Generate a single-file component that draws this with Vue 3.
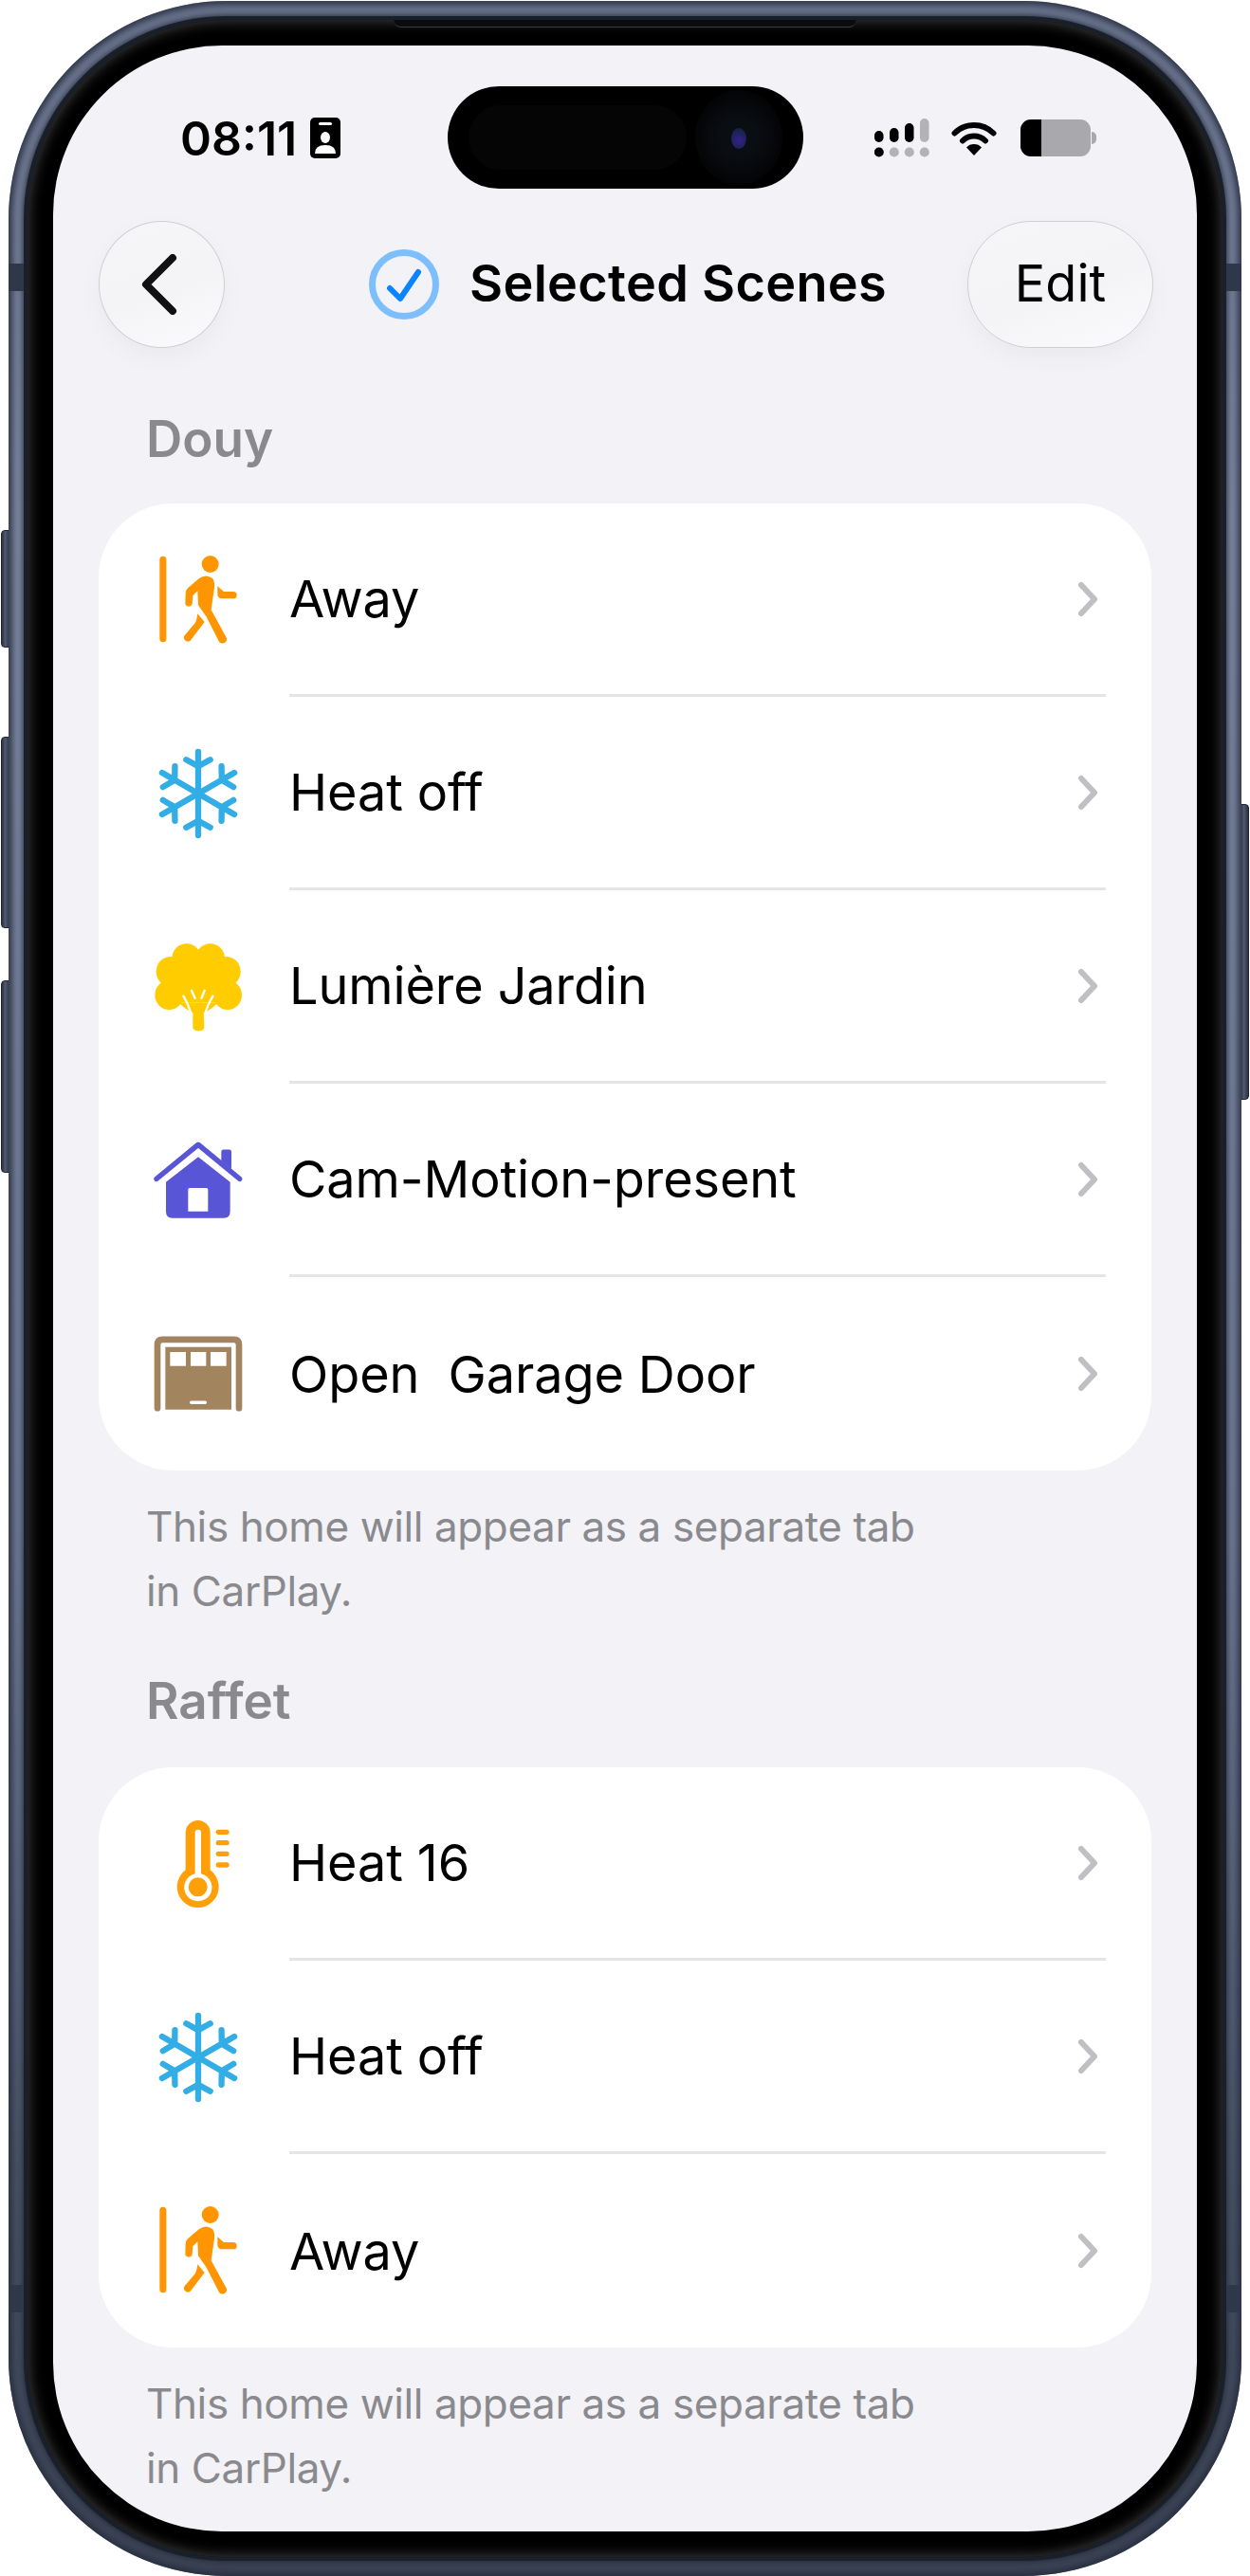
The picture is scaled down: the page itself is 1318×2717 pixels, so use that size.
<script setup>
const sections = [
  {
    name: 'Douy',
    rows: [
      { label: 'Away', icon: 'away' },
      { label: 'Heat off', icon: 'snow' },
      { label: 'Lumière Jardin', icon: 'tree' },
      { label: 'Cam-Motion-present', icon: 'house' },
      { label: 'Open  Garage Door', icon: 'garage' },
    ],
  },
  {
    name: 'Raffet',
    rows: [
      { label: 'Heat 16', icon: 'thermo' },
      { label: 'Heat off', icon: 'snow' },
      { label: 'Away', icon: 'away' },
    ],
  },
]
const spokes = [0, 60, 120, 180, 240, 300]
</script>

<template>
  <div class="page">
    <span class="side-btn left" style="top: 559px; height: 124px"></span>
    <span class="side-btn left" style="top: 777px; height: 202px"></span>
    <span class="side-btn left" style="top: 1034px; height: 203px"></span>
    <span class="side-btn right" style="top: 848px; height: 312px"></span>

    <div class="phone">
      <span class="antenna a-left" style="top: 277px"></span>
      <span class="antenna a-right" style="top: 277px"></span>
      <span class="antenna a-left" style="top: 2409px"></span>
      <span class="antenna a-right" style="top: 2409px"></span>
      <div class="edge">
        <div class="bezel">
          <span class="speaker"></span>
          <div class="screen">
            <div class="island">
              <span class="sensor"></span>
              <span class="cam"><span class="lens"></span></span>
            </div>

            <div class="status">
              <span class="time">08:11</span>
              <svg class="badge" width="32" height="43" viewBox="0 0 32 43">
                <rect width="32" height="43" rx="5" fill="#000" />
                <rect x="9" y="5" width="14" height="3" rx="1.5" fill="#fff" />
                <ellipse cx="16" cy="21" rx="5" ry="6" fill="#fff" />
                <path d="M5 38 Q5 29 16 29 Q27 29 27 38 Z" fill="#fff" />
              </svg>
              <div class="status-right">
                <svg width="58" height="41" viewBox="0 0 58 41">
                  <rect x="0" y="13" width="9.5" height="12" rx="4.7" fill="#000" />
                  <rect x="16" y="10" width="9.5" height="15" rx="4.7" fill="#000" />
                  <rect x="32" y="5" width="9.5" height="20" rx="4.7" fill="#000" />
                  <rect x="48" y="0" width="9.5" height="25" rx="4.7" fill="#b3b3b6" />
                  <circle cx="4.8" cy="35.5" r="5" fill="#000" />
                  <circle cx="20.8" cy="35.5" r="5" fill="#b3b3b6" />
                  <circle cx="36.8" cy="35.5" r="5" fill="#b3b3b6" />
                  <circle cx="52.8" cy="35.5" r="5" fill="#b3b3b6" />
                </svg>
                <svg class="wifi" width="48" height="37" viewBox="0 0 48 37">
                  <path d="M3.5 13.5 A 29 29 0 0 1 44.5 13.5" fill="none" stroke="#000" stroke-width="6" stroke-linecap="round" />
                  <path d="M12 21.5 A 17 17 0 0 1 36 21.5" fill="none" stroke="#000" stroke-width="6" stroke-linecap="round" />
                  <path d="M24 37 L16 28.5 A 11 11 0 0 1 32 28.5 Z" fill="#000" />
                </svg>
                <div class="battery"><span class="battery-fill"></span></div>
              </div>
            </div>

            <header class="nav">
              <button class="glass back">
                <svg width="38" height="64" viewBox="0 0 38 64">
                  <path d="M33 4 L5 32 L33 60" fill="none" stroke="#111" stroke-width="8" stroke-linecap="round" stroke-linejoin="round" />
                </svg>
              </button>
              <div class="title">
                <svg width="74" height="74" viewBox="0 0 74 74">
                  <circle cx="37" cy="37" r="33.5" fill="none" stroke="#7dbffd" stroke-width="7" />
                  <path d="M22 41 L33 52 L52 24" fill="none" stroke="#0a84ff" stroke-width="6" stroke-linecap="round" stroke-linejoin="round" />
                </svg>
                <span>Selected Scenes</span>
              </div>
              <button class="glass edit">Edit</button>
            </header>

            <section v-for="section in sections" :key="section.name" class="section">
              <h2>{{ section.name }}</h2>
              <ul class="card">
                <li v-for="row in section.rows" :key="row.label" class="row">
                  <svg class="icon" width="100" height="100" viewBox="0 0 300 300">
                    <g v-if="row.icon === 'away'" transform="translate(-87,-69)" fill="#ff9500">
                      <rect x="115" y="80" width="21" height="272" rx="10.5" />
                      <circle cx="275" cy="105" r="27" />
                      <path d="M240 150 Q262 135 282 150 Q290 160 288 180 L278 250 L325 335 A13 13 0 0 1 303 350 L262 270 L237 235 L235 190 L220 205 L218 232 A12 12 0 0 1 196 232 L197 195 Q198 185 205 180 Z" />
                      <path d="M298 175 L318 192 L348 192 A11 11 0 0 1 348 214 L312 214 Q298 212 298 200 Z" />
                      <path d="M235 262 L257 288 L212 347 A13 13 0 0 1 192 333 L228 290 Q233 280 235 262 Z" />
                    </g>
                    <g v-else-if="row.icon === 'snow'" transform="translate(150,150)" fill="none" stroke="#32ade6" stroke-width="19" stroke-linecap="round" stroke-linejoin="round">
                      <path
                        v-for="deg in spokes"
                        :key="deg"
                        :transform="`rotate(${deg})`"
                        d="M0 0 V-132 M-38 -107 L0 -86 L38 -107"
                      />
                    </g>
                    <g v-else-if="row.icon === 'tree'" transform="translate(-87,-33) scale(1,1.033)">
                      <g fill="#ffcc00">
                        <circle cx="200" cy="90" r="46" />
                        <circle cx="275" cy="90" r="46" />
                        <circle cx="150" cy="130" r="46" />
                        <circle cx="325" cy="130" r="46" />
                        <circle cx="145" cy="202" r="45" />
                        <circle cx="330" cy="202" r="45" />
                        <rect x="150" y="90" width="175" height="135" />
                        <path d="M175 225 Q190 240 215 255 L260 255 Q285 240 300 225 Z" />
                        <path d="M220 240 H254 L256 300 Q256 312 238 312 Q220 312 220 300 Z" />
                      </g>
                      <g fill="none" stroke="#fff" stroke-width="7">
                        <path d="M189 203 Q208 235 216 265" />
                        <path d="M285 203 Q264 235 258 265" />
                        <path d="M215 186 L228 214" />
                        <path d="M258 186 L246 214" />
                      </g>
                    </g>
                    <g v-else-if="row.icon === 'house'" transform="translate(-87,-645) scale(1,1.033)" fill="#5856d6">
                      <path d="M310 682 Q310 675 317 675 H335 Q342 675 342 682 V735 L310 710 Z" />
                      <path d="M105 765 L237 660 L368 765" fill="none" stroke="#5856d6" stroke-width="16" stroke-linecap="round" stroke-linejoin="round" />
                      <path fill-rule="evenodd" d="M237 698 L338 775 V865 Q338 885 318 885 H155 Q135 885 135 865 V775 Z M210 793 Q205 793 205 798 V865 H268 V798 Q268 793 263 793 Z" />
                    </g>
                    <g v-else-if="row.icon === 'garage'" transform="translate(-87,-1257) scale(1,1.033)" fill="#a2845e">
                      <path d="M108 1467 V1273 Q108 1257 124 1257 H350 Q366 1257 366 1273 V1467" fill="none" stroke="#a2845e" stroke-width="20" stroke-linecap="round" />
                      <path fill-rule="evenodd" d="M133 1280 H342 V1472 H133 Z M148 1295 V1338 H198 V1295 Z M213 1295 V1338 H262 V1295 Z M276 1295 V1338 H326 V1295 Z M215 1445 Q210 1445 210 1450 Q210 1455 215 1455 H259 Q264 1455 264 1450 Q264 1445 259 1445 Z" />
                    </g>
                    <g v-else transform="translate(-87,-45)">
                      <path fill="#ff9f0a" d="M197 96 A39 39 0 0 1 275 96 V214 A66 66 0 1 1 197 214 Z" />
                      <path fill="#fff" d="M227 96 A9.5 9.5 0 0 1 246 96 V226 A44 44 0 1 1 227 226 Z" />
                      <circle cx="236" cy="268" r="30" fill="#ff9f0a" />
                      <g fill="#ff9f0a">
                        <rect x="293" y="86" width="42" height="16" rx="8" />
                        <rect x="293" y="120" width="42" height="16" rx="8" />
                        <rect x="293" y="155" width="42" height="16" rx="8" />
                        <rect x="293" y="190" width="42" height="16" rx="8" />
                      </g>
                    </g>
                  </svg>
                  <div class="row-main">
                    <span class="label">{{ row.label }}</span>
                    <svg class="chev" width="22" height="38" viewBox="0 0 22 38">
                      <path d="M4 4 L18 19 L4 34" fill="none" stroke="#c0c0c4" stroke-width="6" stroke-linecap="round" stroke-linejoin="round" />
                    </svg>
                  </div>
                </li>
              </ul>
              <p class="foot">This home will appear as a separate tab<br />in CarPlay.</p>
            </section>
          </div>
        </div>
      </div>
    </div>
  </div>
</template>

<style>
body {
  background: #fff;
}
</style>

<style scoped>
.page {
  position: relative;
  width: 1318px;
  height: 2717px;
  overflow: hidden;
  font-family: Inter, 'Liberation Sans', sans-serif;
}

/* -------------------------- */
/* HARDWARE */
/* -------------------------- */
.side-btn {
  position: absolute;
  width: 10px;
  box-sizing: border-box;
  background: linear-gradient(to right, #2b3242, #505a70 45%, #2a3140);
  border: 1px solid #1f2531;
}
.side-btn.left {
  left: 1px;
  border-radius: 4px 0 0 4px;
}
.side-btn.right {
  right: 1px;
  border-radius: 0 4px 4px 0;
}

.phone {
  position: relative;
  margin: 1px 0 0 9px;
  width: 1300px;
  height: 2716px;
  padding: 16px;
  box-sizing: border-box;
  border-radius: 230px;
  background: linear-gradient(to bottom, #667089, #78839c 20%, #6b7690 60%, #465063 85%, #3a4253);
  box-shadow: inset 0 0 6px 4px rgba(38, 45, 62, 0.85);
}
.antenna {
  position: absolute;
  width: 16px;
  height: 29px;
  background: #2f374a;
  z-index: 1;
}
.a-left {
  left: 0;
}
.a-right {
  right: 0;
}
.edge {
  height: 100%;
  padding: 4px;
  box-sizing: border-box;
  border-radius: 214px;
  background: #1a202b;
  box-shadow: 0 0 4px 2px rgba(30, 36, 50, 0.6);
}
.bezel {
  position: relative;
  height: 100%;
  padding: 27px;
  box-sizing: border-box;
  border-radius: 210px;
  background: #000;
  box-shadow: inset 0 0 13px 2px #3a3a3a;
}
.speaker {
  position: absolute;
  left: 386px;
  top: 0;
  width: 488px;
  height: 7px;
  background: #0a0b0f;
  border-bottom: 1px solid #3c3d40;
  border-radius: 0 0 10px 10px;
}

/* -------------------------- */
/* SCREEN */
/* -------------------------- */
.screen {
  position: relative;
  width: 1206px;
  height: 2622px;
  overflow: hidden;
  border-radius: 178px;
  background: #f2f2f7;
  padding-top: 76px;
  box-sizing: border-box;
}
.island {
  position: absolute;
  left: 416px;
  top: 43px;
  width: 375px;
  height: 108px;
  border-radius: 54px;
  background: #000;
}
.sensor {
  position: absolute;
  left: 22px;
  top: 20px;
  width: 230px;
  height: 68px;
  border-radius: 34px;
  background: #050506;
}
.cam {
  position: absolute;
  right: 22px;
  top: 4px;
  width: 92px;
  height: 100px;
  border-radius: 50%;
  background: radial-gradient(circle, #0a0d12 30%, #040405 70%);
}
.lens {
  position: absolute;
  left: 38px;
  top: 40px;
  width: 16px;
  height: 22px;
  border-radius: 50%;
  background: radial-gradient(circle at 50% 60%, #34208a, #15254a 70%);
}

.status {
  display: flex;
  align-items: center;
  height: 43px;
  padding: 0 104px 0 134px;
}
.time {
  font-size: 50px;
  font-weight: 600;
  color: #000;
}
.badge {
  margin-left: 14px;
}
.status-right {
  display: flex;
  align-items: center;
  margin-left: auto;
}
.wifi {
  margin-left: 23px;
}
.battery {
  position: relative;
  width: 74px;
  height: 39px;
  margin-left: 25px;
  margin-right: 8px;
  border-radius: 11px;
  background: #a9a9ad;
}
.battery-fill {
  display: block;
  width: 22px;
  height: 100%;
  border-radius: 11px 0 0 11px;
  background: #000;
}
.battery::after {
  content: '';
  position: absolute;
  right: -6px;
  top: 13px;
  width: 5px;
  height: 13px;
  border-radius: 0 6px 6px 0;
  background: #a9a9ad;
}

.nav {
  display: flex;
  align-items: center;
  height: 134px;
  margin-top: 66px;
  padding: 0 46px 0 48px;
}
.glass {
  display: flex;
  align-items: center;
  justify-content: center;
  height: 134px;
  padding: 0;
  box-sizing: border-box;
  border: 1.5px solid #cfcfd2;
  background: linear-gradient(160deg, #f6f6f9, #f4f4f7 55%, #fbfbfd);
  box-shadow: 0 10px 26px rgba(0, 0, 0, 0.04);
  font-family: inherit;
  color: #000;
}
.back {
  width: 133px;
  border-radius: 50%;
}
.back svg {
  margin-left: -6px;
}
.edit {
  width: 196px;
  margin-left: auto;
  padding-bottom: 3px;
  border-radius: 67px;
  font-size: 54px;
}
.title {
  display: flex;
  align-items: center;
  gap: 32px;
  margin-left: 152px;
  font-size: 54px;
  font-weight: 600;
  letter-spacing: 0.3px;
  color: #000;
}
.title span {
  padding-bottom: 3px;
}

.section h2 {
  margin: 0 0 38px 98px;
  font-size: 53px;
  line-height: 64px;
  font-weight: 600;
  color: #8a8a8e;
}
.section:first-of-type h2 {
  margin-top: 64px;
  margin-bottom: 36px;
}
.card {
  list-style: none;
  margin: 0 48px;
  padding: 0;
  border-radius: 78px;
  background: #fff;
}
.row {
  display: flex;
  height: 204px;
}
.icon {
  flex: none;
  align-self: center;
  margin-left: 55px;
}
.row-main {
  flex: 1;
  display: flex;
  align-items: center;
  justify-content: space-between;
  margin-left: 46px;
  padding-right: 8px;
  margin-right: 48px;
  border-bottom: 3px solid #e5e5e7;
}
.row:last-child .row-main {
  border-bottom: none;
}
.label {
  font-size: 54px;
  letter-spacing: -0.1px;
  white-space: pre;
  color: #000;
}
.foot {
  margin: 25px 0 0 98px;
  font-size: 44px;
  line-height: 68px;
  letter-spacing: -0.4px;
  color: #8a8a8e;
}
.section + .section {
  margin-top: 50px;
}
</style>
